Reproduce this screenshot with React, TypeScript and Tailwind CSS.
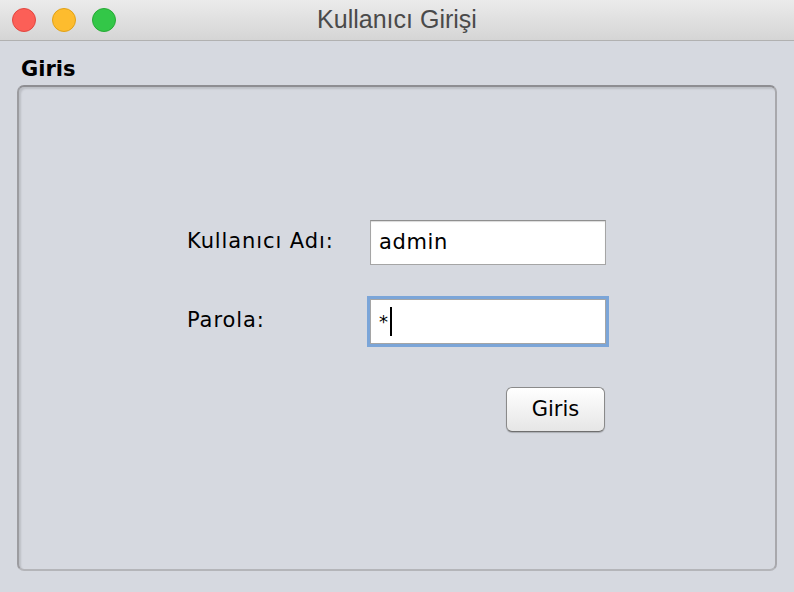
export default function App() {
  return (
    <div className="w-[794px] h-[592px] bg-[#d6d9e0] flex flex-col overflow-hidden" style={{ fontFamily: '"DejaVu Sans", sans-serif' }}>
      {/* title bar */}
      <div className="relative h-[41px] shrink-0 bg-gradient-to-b from-[#ebebeb] to-[#d5d5d5] border-b border-[#b1b1b1] flex items-center">
        <div className="flex items-center gap-[16px] pl-[12px]">
          <span className="w-[24px] h-[24px] rounded-full bg-[#fc5f57] border border-[#e2463f]" />
          <span className="w-[24px] h-[24px] rounded-full bg-[#fdbc2e] border border-[#e1a116]" />
          <span className="w-[24px] h-[24px] rounded-full bg-[#33c748] border border-[#27aa35]" />
        </div>
        <div className="absolute inset-0 flex items-center justify-center text-[25px] text-[#4a4a4a] pb-[1px]" style={{ fontFamily: '"Liberation Sans", Arial, sans-serif' }}>
          Kullanıcı Girişi
        </div>
      </div>

      {/* body */}
      <div className="flex-1 pl-[17px] pt-[16px]">
        <div className="text-[21px] font-bold text-black leading-[25px] pl-[4px]">Giris</div>
        <div className="mt-[3px] w-[760px] h-[486px] rounded-[7px] border-[2px] border-t-[#8e8e92] border-l-[#9c9ca0] border-r-[#a8a8ac] border-b-[#b4b5b9] shadow-[inset_2px_2px_2px_rgba(0,0,0,0.12)] pl-[168px] pt-[133px]">
          <div className="grid grid-cols-[183px_236px] gap-y-[34px] items-center">
            <div className="text-[21px] tracking-[0.9px] text-black pb-[2px]">Kullanıcı Adı:</div>
            <div className="h-[45px] bg-white border border-[#a5a5a5] border-t-[#8f8f8f] shadow-[inset_0_1px_1px_rgba(0,0,0,0.15)] flex items-center pl-[8px] text-[21px] tracking-[0.6px] text-black">
              admin
            </div>
            <div className="text-[21px] tracking-[0.9px] text-black pb-[2px]">Parola:</div>
            <div className="h-[45px] bg-white border border-[#a5a5a5] outline-[3px] outline-solid outline-[#7ba5d8] flex items-center pl-[8px] text-[18px] text-black">
              <span>*</span>
              <span className="w-[2px] h-[29px] bg-black ml-[2px]" />
            </div>
          </div>
          <div className="flex justify-start pl-[319px] mt-[43px]">
            <button className="w-[99px] h-[45px] rounded-[6px] border border-[#8a8a8a] border-b-[#6f6f6f] bg-gradient-to-b from-white to-[#e6e6e6] shadow-[0_1px_1px_rgba(0,0,0,0.2)] text-[21px] text-black">
              Giris
            </button>
          </div>
        </div>
      </div>
    </div>
  );
}
